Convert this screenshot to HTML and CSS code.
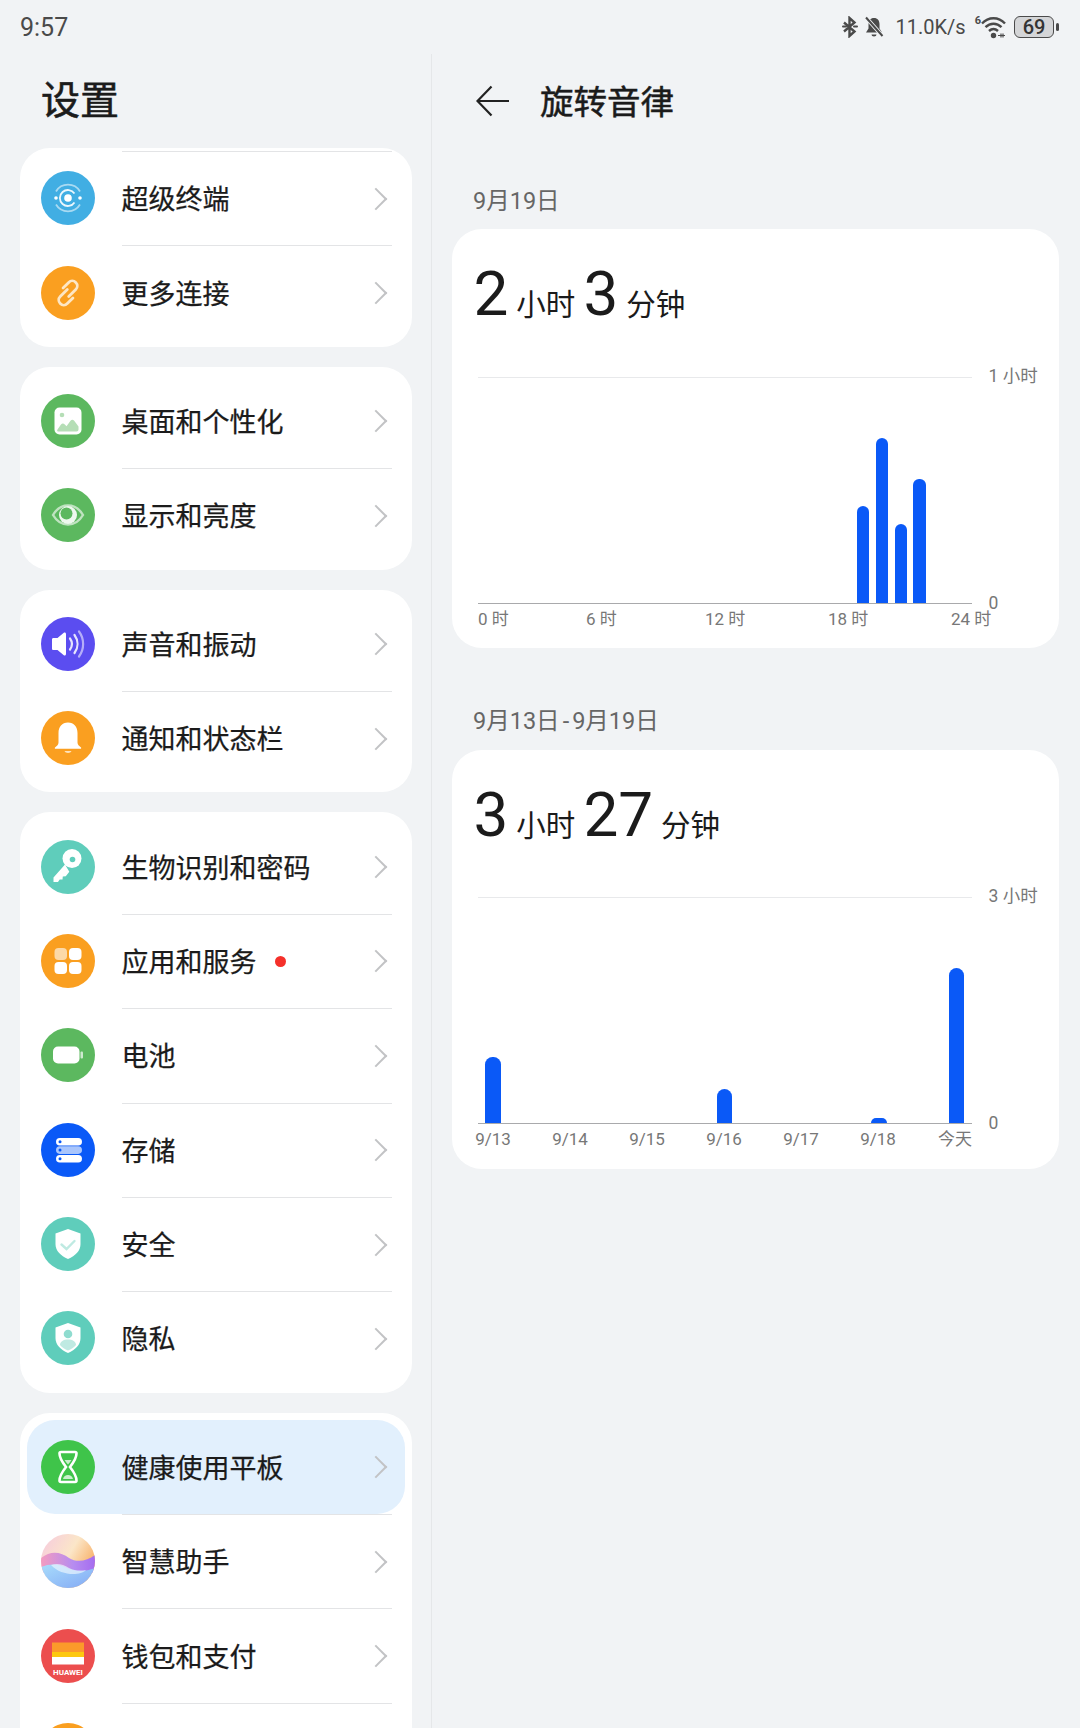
FILE: index.html
```html
<!DOCTYPE html>
<html>

<head>
  <title>设置</title>
  <meta charset="utf-8">
  <link rel="stylesheet" href="styles.css">
</head>

<body>

  <div class="status_bar">
    <div class="status_time">9:57</div>
    <div class="status_icons">
      <svg class="status_bt" width="16" height="22" viewBox="0 0 16 22">
        <path d="M2 6.500 12.500 15.500 7.500 20V2L12.500 6.500 2 15.500" fill="none" stroke="#4a4a4a" stroke-width="2.400"/>
        <path d="M1 10.500h3M12 10.500h3" stroke="#4a4a4a" stroke-width="2" stroke-linecap="round"/>
      </svg>
      <svg class="status_bell" width="20" height="22" viewBox="0 0 20 22">
        <path d="M10 2c-3.600 0-5.500 2.600-5.500 6v4.500L2 16.500h16l-2.500-4V8c0-3.400-1.900-6-5.500-6z" fill="#4a4a4a"/>
        <path d="M7.500 18.500h5a2.500 2 0 0 1-5 0z" fill="#4a4a4a"/>
        <path d="M2 1.500 18.500 20" stroke="#f1f3f5" stroke-width="4"/>
        <path d="M2 1.500 18.500 20" stroke="#4a4a4a" stroke-width="2"/>
      </svg>
      <div class="status_speed">11.0K/s</div>
      <div class="status_wifi">
        <span class="wifi_six">6</span>
        <svg width="25" height="24" viewBox="0 0 25 24">
          <path d="M1 8.500C7.500 1.500 17.500 1.500 24 8.500M4.500 12.200c4.700-4.700 11.300-4.700 16 0M8 16c2.800-2.600 6.200-2.600 9 0" fill="none" stroke="#4a4a4a" stroke-width="2.400"/>
          <circle cx="12.500" cy="20.500" r="2.700" fill="#4a4a4a"/>
          <path d="M17 20.500h7M20 18.500v4M22 18.500v4" stroke="#4a4a4a" stroke-width="1.200"/>
        </svg>
      </div>
      <div class="status_battery">
        <div class="battery_body">69</div>
        <div class="battery_tip"></div>
      </div>
    </div>
  </div>

  <div class="panes">

    <div class="settings_pane">
      <div class="pane_title">设置</div>

      <div class="card card_first">
        <div class="row">
          <svg class="row_icon" viewBox="0 0 54 54">
            <circle cx="27" cy="27" r="27" fill="#41aee3"/>
            <circle cx="27" cy="27" r="3.800" fill="#fff"/>
            <path d="M33.500 22.500A8 8 0 1 0 33.500 31.500" fill="none" stroke="#fff" stroke-width="1.800" opacity=".9"/>
            <path d="M15 20.500A14 14 0 0 1 39 20.500M39 33.500A14 14 0 0 1 15 33.500" fill="none" stroke="#fff" stroke-width="1.800" opacity=".55"/>
            <circle cx="15" cy="27" r="1.800" fill="#fff"/>
            <circle cx="39" cy="27" r="1.800" fill="#fff"/>
          </svg>
          <div class="row_main"><span class="row_label">超级终端</span><span class="chevron"></span></div>
        </div>
        <div class="row">
          <svg class="row_icon" viewBox="0 0 54 54">
            <circle cx="27" cy="27" r="27" fill="#fa9f20"/>
            <g fill="none" stroke="#fde6c4" stroke-width="2.800" stroke-linecap="round" transform="rotate(-45 27 27)">
              <path d="M29 24h-10a5 5 0 0 0 0 10h8"/>
              <path d="M25 30h10a5 5 0 0 0 0-10h-8"/>
            </g>
          </svg>
          <div class="row_main"><span class="row_label">更多连接</span><span class="chevron"></span></div>
        </div>
      </div>

      <div class="card">
        <div class="row">
          <svg class="row_icon" viewBox="0 0 54 54">
            <circle cx="27" cy="27" r="27" fill="#5cb85f"/>
            <rect x="13.500" y="13.500" width="27" height="27" rx="5" fill="#fff"/>
            <circle cx="21" cy="21" r="2.300" fill="#b5deb6"/>
            <path d="M17 37.500c-1 0-1-1-.500-2l3.500-5c1.200-1.500 2.500-1.500 3.800 0l1.700 1.800 4-5.500c1.200-1.500 2.500-1.500 3.700 0l4.300 5.700v3c0 1.200-.8 2-2 2z" fill="#b5deb6"/>
          </svg>
          <div class="row_main"><span class="row_label">桌面和个性化</span><span class="chevron"></span></div>
        </div>
        <div class="row">
          <svg class="row_icon" viewBox="0 0 54 54">
            <circle cx="27" cy="27" r="27" fill="#5cb85f"/>
            <path d="M12 27c3.500-6 9-9.500 15-9.500S38.500 21 42 27c-3.500 6-9 9.500-15 9.500S15.500 33 12 27z" fill="none" stroke="#bfe3c0" stroke-width="2.400"/>
            <circle cx="27" cy="27" r="9" fill="#eef8ee"/>
            <circle cx="25.500" cy="25.500" r="6" fill="#5cb85f"/>
          </svg>
          <div class="row_main"><span class="row_label">显示和亮度</span><span class="chevron"></span></div>
        </div>
      </div>

      <div class="card">
        <div class="row">
          <svg class="row_icon" viewBox="0 0 54 54">
            <circle cx="27" cy="27" r="27" fill="#5b4df0"/>
            <path d="M11 22.500c0-1 .6-1.500 1.500-1.500h4l6-5c1.200-1 2.500-.4 2.500 1v20c0 1.400-1.300 2-2.500 1l-6-5h-4c-.9 0-1.500-.5-1.500-1.500z" fill="#fff"/>
            <path d="M29 21.500c2.500 3.500 2.500 7.500 0 11M33.500 18c4 5.500 4 12.500 0 18" fill="none" stroke="#fff" stroke-width="2.200" stroke-linecap="round" opacity=".85"/>
            <path d="M38 14.500c5.500 7.500 5.500 17.500 0 25" fill="none" stroke="#fff" stroke-width="2.200" stroke-linecap="round" opacity=".55"/>
          </svg>
          <div class="row_main"><span class="row_label">声音和振动</span><span class="chevron"></span></div>
        </div>
        <div class="row">
          <svg class="row_icon" viewBox="0 0 54 54">
            <circle cx="27" cy="27" r="27" fill="#fa9f20"/>
            <path d="M27 11.500c-6 0-9.500 4.500-9.500 10.500v9.500c0 2-1.500 3.500-3.500 5-.5.500-.2 1.300.5 1.300h25c.7 0 1-.8.5-1.300-2-1.500-3.500-3-3.500-5V22c0-6-3.500-10.500-9.500-10.500z" fill="#fff"/>
            <path d="M23.500 40h7c-.8 2.600-6.200 2.600-7 0z" fill="#fde3bd"/>
          </svg>
          <div class="row_main"><span class="row_label">通知和状态栏</span><span class="chevron"></span></div>
        </div>
      </div>

      <div class="card">
        <div class="row">
          <svg class="row_icon" viewBox="0 0 54 54">
            <circle cx="27" cy="27" r="27" fill="#5fcdbb"/>
            <path d="M24 24.500 12.500 37.500v4.500h4.500l1.700-2.600 2.800.2 .3-3 3-.3 3.500-4.500z" fill="#fff"/>
            <circle cx="31" cy="18.500" r="9.500" fill="#fff"/>
            <circle cx="31.500" cy="19.500" r="2.800" fill="#5fcdbb"/>
          </svg>
          <div class="row_main"><span class="row_label">生物识别和密码</span><span class="chevron"></span></div>
        </div>
        <div class="row">
          <svg class="row_icon" viewBox="0 0 54 54">
            <circle cx="27" cy="27" r="27" fill="#fa9f20"/>
            <rect x="13.500" y="14" width="12.500" height="12" rx="4" fill="#fcd9a8"/>
            <rect x="28" y="14" width="12.500" height="12" rx="4" fill="#fff"/>
            <rect x="13.500" y="28" width="12.500" height="12" rx="4" fill="#fff"/>
            <rect x="28" y="28" width="12.500" height="12" rx="4" fill="#fff"/>
          </svg>
          <div class="row_main"><span class="row_label">应用和服务</span><span class="red_dot"></span><span class="chevron"></span></div>
        </div>
        <div class="row">
          <svg class="row_icon" viewBox="0 0 54 54">
            <circle cx="27" cy="27" r="27" fill="#5cb85f"/>
            <rect x="12" y="18.500" width="26.500" height="17" rx="5" fill="#fff"/>
            <rect x="39.500" y="23.500" width="2.500" height="7" rx="1" fill="#cfe9d0"/>
          </svg>
          <div class="row_main"><span class="row_label">电池</span><span class="chevron"></span></div>
        </div>
        <div class="row">
          <svg class="row_icon" viewBox="0 0 54 54">
            <circle cx="27" cy="27" r="27" fill="#0a59f7"/>
            <rect x="15" y="15" width="26" height="7.600" rx="3.800" fill="#fff"/>
            <rect x="15" y="23.300" width="26" height="7.600" rx="3.800" fill="#a9c5fc"/>
            <rect x="15" y="32" width="26" height="7.600" rx="3.800" fill="#fff"/>
            <circle cx="19" cy="18.800" r="1.500" fill="#0a59f7"/>
            <circle cx="19" cy="27.100" r="1.500" fill="#0a59f7"/>
            <circle cx="19" cy="35.800" r="1.500" fill="#0a59f7"/>
          </svg>
          <div class="row_main"><span class="row_label">存储</span><span class="chevron"></span></div>
        </div>
        <div class="row">
          <svg class="row_icon" viewBox="0 0 54 54">
            <circle cx="27" cy="27" r="27" fill="#5fcdbb"/>
            <path d="M27 12 39.500 16.500V27c0 7-5 11.500-12.500 15C19.500 38.500 14.500 34 14.500 27V16.500z" fill="#fff"/>
            <path d="M20.500 27.500l5 4.500 8-8" fill="none" stroke="#bfeae2" stroke-width="2.400" stroke-linecap="round"/>
          </svg>
          <div class="row_main"><span class="row_label">安全</span><span class="chevron"></span></div>
        </div>
        <div class="row">
          <svg class="row_icon" viewBox="0 0 54 54">
            <circle cx="27" cy="27" r="27" fill="#5fcdbb"/>
            <path d="M27 12 39.500 16.500V27c0 7-5 11.500-12.500 15C19.500 38.500 14.500 34 14.500 27V16.500z" fill="#fff"/>
            <circle cx="27" cy="23" r="4.300" fill="#8fdccf"/>
            <path d="M19 34c0-3.500 3.500-5.500 8-5.500s8 2 8 5.500c-2 2.500-5 4.300-8 5.500-3-1.200-6-3-8-5.500z" fill="#bfeae2"/>
          </svg>
          <div class="row_main"><span class="row_label">隐私</span><span class="chevron"></span></div>
        </div>
      </div>

      <div class="card">
        <div class="row row_active">
          <svg class="row_icon" viewBox="0 0 54 54">
            <circle cx="27" cy="27" r="27" fill="#3fc44a"/>
            <path d="M20 12h14c1 0 1.500.7 1.500 1.500 0 5-3 9-6.500 13.500 3.500 4.500 6.500 8.500 6.500 13.500 0 .8-.5 1.500-1.500 1.500H20c-1 0-1.500-.7-1.500-1.500 0-5 3-9 6.500-13.500-3.500-4.500-6.500-8.500-6.500-13.500 0-.8.5-1.500 1.500-1.500z" fill="none" stroke="#fff" stroke-width="2.600"/>
            <path d="M23.500 20h7c-1 1.500-2 2.800-3.500 4.500-1.500-1.700-2.500-3-3.500-4.500zM22 39c.5-2.500 2.700-4 5-4s4.500 1.500 5 4z" fill="#c9efcc"/>
          </svg>
          <div class="row_main"><span class="row_label">健康使用平板</span><span class="chevron"></span></div>
        </div>
        <div class="row">
          <svg class="row_icon" viewBox="0 0 54 54">
            <defs>
              <clipPath id="orb_clip"><circle cx="27" cy="27" r="27"/></clipPath>
              <linearGradient id="orb_top" x1="0" y1="0" x2="1" y2=".6">
                <stop offset="0" stop-color="#f6c9e0"/>
                <stop offset=".55" stop-color="#fbe6c8"/>
                <stop offset="1" stop-color="#f8a95a"/>
              </linearGradient>
              <linearGradient id="orb_mid" x1="0" y1="0" x2="1" y2="0">
                <stop offset="0" stop-color="#f39bc0"/>
                <stop offset=".6" stop-color="#b68cf0"/>
                <stop offset="1" stop-color="#a56cf0"/>
              </linearGradient>
              <linearGradient id="orb_low" x1="0" y1="0" x2="1" y2="1">
                <stop offset="0" stop-color="#a8dcfb"/>
                <stop offset="1" stop-color="#83a9f5"/>
              </linearGradient>
            </defs>
            <g clip-path="url(#orb_clip)">
              <rect width="54" height="54" fill="url(#orb_top)"/>
              <path d="M0 24c10-8 20-6 28 0 8 5 18 3 26-3v18H0z" fill="url(#orb_mid)"/>
              <path d="M0 33c10-4 18-3 26 1 9 4 18 4 28 0v20H0z" fill="url(#orb_low)"/>
              <path d="M10 31c6-2 12-1 18 3 6 3 12 3 17 2-6 6-25 6-35-5z" fill="#e8f3fd" opacity=".7"/>
            </g>
          </svg>
          <div class="row_main"><span class="row_label">智慧助手</span><span class="chevron"></span></div>
        </div>
        <div class="row">
          <svg class="row_icon" viewBox="0 0 54 54">
            <circle cx="27" cy="27" r="27" fill="#ec4e4e"/>
            <rect x="11" y="13.500" width="32" height="9.500" fill="#fb9a2a"/>
            <rect x="11" y="23" width="32" height="5" fill="#fdc80f"/>
            <rect x="11" y="28" width="32" height="7.500" fill="#fff"/>
            <text x="27" y="45.500" class="wallet_text" text-anchor="middle">HUAWEI</text>
          </svg>
          <div class="row_main"><span class="row_label">钱包和支付</span><span class="chevron"></span></div>
        </div>
        <div class="row">
          <svg class="row_icon" viewBox="0 0 54 54">
            <circle cx="27" cy="27" r="27" fill="#fa9f20"/>
          </svg>
          <div class="row_main"></div>
        </div>
      </div>
    </div>

    <div class="detail_pane">
      <div class="detail_header">
        <svg width="34" height="32" viewBox="0 0 34 32">
          <path d="M33 16H2M15.500 1.500 1.500 16l14 14.500" fill="none" stroke="#222" stroke-width="2.200"/>
        </svg>
        <div class="detail_title">旋转音律</div>
      </div>

      <div class="date_label date_first">9月19日</div>
      <div class="usage_card">
        <div class="usage_total">
          <span class="num">2</span><span class="unit">小时</span><span class="num">3</span><span class="unit">分钟</span>
        </div>
        <div class="chart">
          <div class="plot plot_day">
            <div class="bar bar_day" style="height: 97px"></div>
            <div class="bar bar_day" style="height: 165px"></div>
            <div class="bar bar_day" style="height: 79px"></div>
            <div class="bar bar_day" style="height: 124px"></div>
          </div>
          <div class="y_labels"><span>1 小时</span><span>0</span></div>
          <div class="x_labels x_day">
            <span>0 时</span><span>6 时</span><span>12 时</span><span>18 时</span><span>24 时</span>
          </div>
        </div>
      </div>

      <div class="date_label date_second">9月13日<span class="date_dash">-</span>9月19日</div>
      <div class="usage_card">
        <div class="usage_total total_week">
          <span class="num">3</span><span class="unit">小时</span><span class="num">27</span><span class="unit">分钟</span>
        </div>
        <div class="chart">
          <div class="plot plot_week">
            <div class="bar bar_week" style="height: 66px"></div>
            <div class="bar bar_week" style="height: 0"></div>
            <div class="bar bar_week" style="height: 0"></div>
            <div class="bar bar_week" style="height: 34px"></div>
            <div class="bar bar_week" style="height: 0"></div>
            <div class="bar bar_week" style="height: 5px"></div>
            <div class="bar bar_week" style="height: 155px"></div>
          </div>
          <div class="y_labels"><span>3 小时</span><span>0</span></div>
          <div class="x_labels x_week">
            <span>9/13</span><span>9/14</span><span>9/15</span><span>9/16</span><span>9/17</span><span>9/18</span><span>今天</span>
          </div>
        </div>
      </div>
    </div>

  </div>

</body>

</html>
```

FILE: styles.css
```css
body {
  margin: 0;
  width: 1080px;
  height: 1728px;
  overflow: hidden;
  background-color: #f1f3f5;
  color: #1b1b1b;
  font-family: Roboto, "Noto Sans CJK SC", sans-serif;
}

.status_bar {
  display: flex;
  justify-content: space-between;
  align-items: center;
  height: 54px;
  padding: 0 21px 0 20px;
  color: #4a4a4a;
}

.status_time {
  font-size: 25px;
}

.status_icons {
  display: flex;
  align-items: center;
}

.status_bell {
  margin-left: 6px;
}

.status_speed {
  margin-left: 12px;
  font-size: 20px;
}

.status_wifi {
  display: flex;
  margin-left: 9px;
}

.wifi_six {
  font-size: 11px;
  font-weight: 700;
  line-height: 12px;
}

.status_battery {
  display: flex;
  align-items: center;
  margin-left: 8px;
}

.battery_body {
  width: 38px;
  height: 20px;
  border: 1.500px solid #4a4a4a;
  border-radius: 6px;
  background-color: #d4d5d7;
  color: #333;
  font-size: 20px;
  font-weight: 500;
  line-height: 20px;
  text-align: center;
}

.battery_tip {
  width: 3px;
  height: 8px;
  margin-left: 2px;
  border-radius: 2px;
  background-color: #4a4a4a;
}

.panes {
  display: flex;
}

.settings_pane {
  box-sizing: border-box;
  flex: none;
  width: 432px;
  padding: 0 19px 0 20px;
  border-right: 1px solid #e5e7e9;
}

.pane_title {
  height: 94px;
  padding-left: 21px;
  font-size: 39px;
  -webkit-text-stroke: 0.600px #1b1b1b;
  line-height: 94px;
}

.card {
  margin-bottom: 20px;
  padding: 7px 0;
  border-radius: 30px;
  background-color: #fff;
}

.card_first {
  padding-top: 3px;
}

.row {
  display: flex;
  align-items: center;
  height: 94.400px;
  margin: 0 7px;
  padding: 0 13px 0 13.500px;
  border-radius: 28px;
}

.row_active {
  background-color: #e2f0fd;
}

.row_icon {
  flex: none;
  width: 54px;
  height: 54px;
  margin-right: 27px;
}

.wallet_text {
  fill: #fff;
  font-size: 8px;
  font-weight: 700;
}

.row_main {
  display: flex;
  flex: 1;
  align-items: center;
  align-self: stretch;
  padding: 0 4px 2px 0;
  border-top: 1px solid #e3e4e6;
}

.row:first-child .row_main {
  border-top-color: transparent;
}

.card_first .row:first-child .row_main {
  border-top-color: #e3e4e6;
}

.row_label {
  font-size: 27px;
  -webkit-text-stroke: 0.250px #1b1b1b;
}

.red_dot {
  width: 11px;
  height: 11px;
  margin: 3px 0 0 18px;
  border-radius: 50%;
  background-color: #f5302a;
}

.chevron {
  box-sizing: border-box;
  width: 16px;
  height: 16px;
  margin: 2px 4px 0 auto;
  border-top: 2.500px solid #c2c3c5;
  border-right: 2.500px solid #c2c3c5;
  transform: rotate(45deg);
}

.detail_pane {
  box-sizing: border-box;
  flex: 1;
  padding: 0 21px 0 20px;
}

.detail_header {
  display: flex;
  align-items: center;
  height: 94px;
  padding-left: 24px;
}

.detail_title {
  margin: 0 0 3px 30px;
  font-size: 33.500px;
  -webkit-text-stroke: 0.500px #1b1b1b;
}

.date_label {
  padding-left: 21px;
  color: #666;
  font-size: 23.500px;
  line-height: 30px;
}

.date_dash {
  margin: 0 3px;
}

.date_first {
  margin-top: 38px;
  margin-bottom: 13px;
}

.date_second {
  margin-top: 58px;
  margin-bottom: 14px;
}

.usage_card {
  height: 419px;
  padding-left: 25.500px;
  border-radius: 30px;
  background-color: #fff;
}

.usage_total {
  height: 148px;
  margin-left: -4px;
  line-height: 129px;
}

.total_week {
  height: 147px;
}

.num {
  font-size: 62px;
}

.unit {
  margin: 0 8px 0 8px;
  font-size: 29.500px;
}

.chart {
  display: grid;
  grid-template-columns: 494px auto;
  grid-template-rows: 227px auto;
}

.plot {
  display: flex;
  align-items: flex-end;
  box-sizing: border-box;
  border-top: 1px solid #e8e9eb;
  border-bottom: 1px solid #a9aaac;
}

.plot_day {
  justify-content: flex-end;
  gap: 6.500px;
  padding-right: 46px;
}

.plot_week {
  justify-content: space-between;
  padding: 0 7.500px;
}

.bar {
  background-color: #0a59f7;
}

.bar_day {
  width: 12.200px;
  border-radius: 6px 6px 0 0;
}

.bar_week {
  width: 15.500px;
  border-radius: 7.500px 7.500px 0 0;
}

.y_labels {
  display: flex;
  flex-direction: column;
  justify-content: space-between;
  height: 247px;
  margin: -11px 0 0 17px;
  color: #777;
  font-size: 17.500px;
  line-height: 20px;
}

.x_labels {
  display: grid;
  grid-column: 1 / span 2;
  padding-top: 5px;
  color: #777;
  font-size: 17px;
  line-height: 20px;
}

.x_day {
  grid-template-columns: 108px 119px 123px 123px auto;
  margin-left: 0.500px;
}

.x_week {
  grid-template-columns: repeat(7, 77px);
  margin-left: -23px;
  text-align: center;
}
```
